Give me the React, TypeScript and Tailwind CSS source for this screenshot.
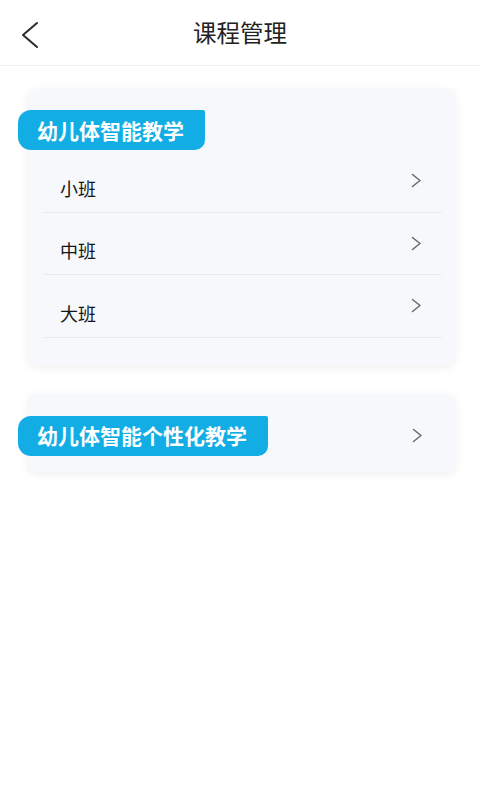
import React from "react";

const FONT = { fontFamily: '"Noto Sans CJK SC", "Noto Sans", sans-serif' };

// 右箭头
function Chevron() {
  return (
    <svg width="11" height="15" viewBox="0 0 11 15" fill="none">
      <polyline
        points="1.5,1.5 9,7.5 1.5,13.5"
        stroke="#6b6b6b"
        strokeWidth="1.6"
        strokeLinecap="round"
        strokeLinejoin="round"
      />
    </svg>
  );
}

// 蓝色标签
function Badge({ children }: { children: React.ReactNode }) {
  return (
    <div className="-ml-[10px] flex h-[40px] w-fit items-center rounded-tl-[13px] rounded-tr-[2px] rounded-br-[10px] rounded-bl-[13px] bg-[#12ade4] pl-[19px] pr-[21px] text-[21px] font-bold leading-none text-white">
      {children}
    </div>
  );
}

const classes = ["小班", "中班", "大班"];

export default function App() {
  return (
    <div className="min-h-[800px] w-full bg-white" style={FONT}>
      {/* 顶部导航 */}
      <header className="relative flex h-[66px] items-center justify-center border-b border-[#f1f2f4]">
        <button className="absolute left-[20px] top-[21px] p-0">
          <svg width="20" height="28" viewBox="0 0 20 28" fill="none">
            <polyline
              points="17,2 3,14 17,26"
              stroke="#2b2b2b"
              strokeWidth="2"
              strokeLinecap="round"
              strokeLinejoin="round"
            />
          </svg>
        </button>
        <h1 className="text-[23.5px] font-normal leading-none text-[#222]">课程管理</h1>
      </header>

      <div className="flex flex-col gap-[29px] pt-[23px] pl-[28px] pr-[25px]">
        {/* 幼儿体智能教学 */}
        <section className="rounded-[8px] bg-[#f6f8fb] pt-[21px] pb-[27px] shadow-[0_2px_10px_rgba(0,0,0,0.07)]">
          <Badge>幼儿体智能教学</Badge>
          <ul className="pl-[15px] pr-[13px]">
            {classes.map((name) => (
              <li
                key={name}
                className="flex h-[62.5px] items-center justify-between border-b border-[#e9ebef] pl-[17px] pr-[20px]"
              >
                <span className="mt-[14px] text-[18px] leading-none text-[#151515]">{name}</span>
                <Chevron />
              </li>
            ))}
          </ul>
        </section>

        {/* 幼儿体智能个性化教学 */}
        <section className="flex items-center justify-between rounded-[8px] bg-[#f6f8fb] pt-[22px] pb-[16px] pr-[32px] shadow-[0_2px_10px_rgba(0,0,0,0.07)]">
          <Badge>幼儿体智能个性化教学</Badge>
          <Chevron />
        </section>
      </div>
    </div>
  );
}
